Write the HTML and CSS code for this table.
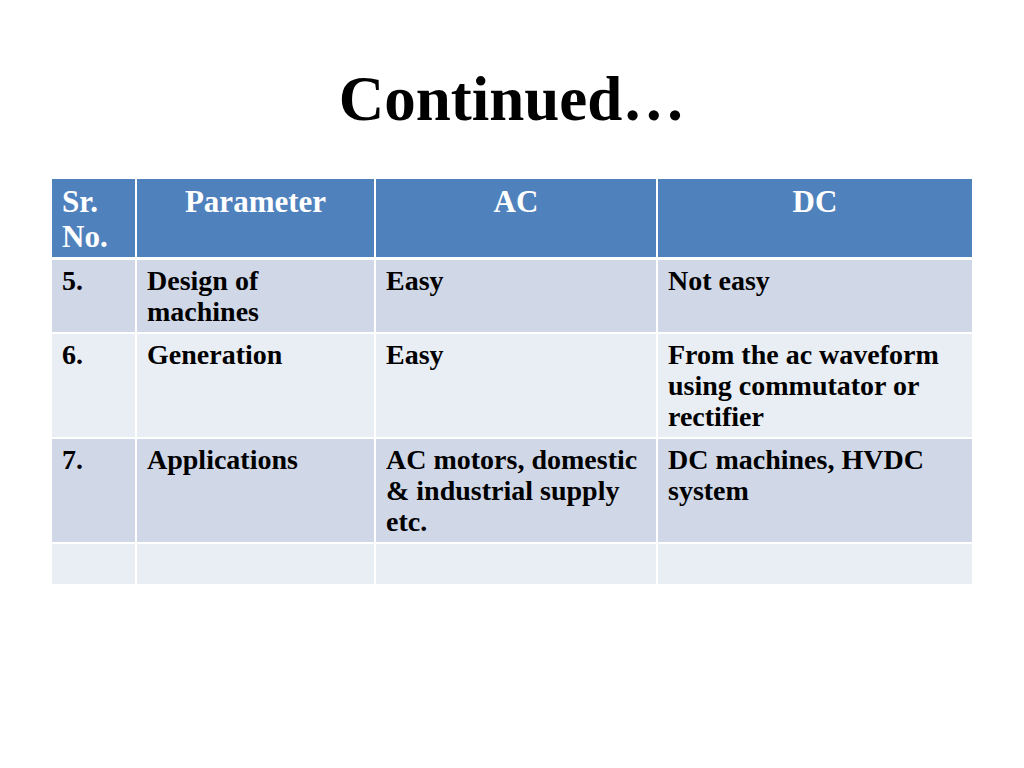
FILE: index.html
```html
<!DOCTYPE html>
<html lang="en">
<head>
<meta charset="utf-8">
<title>Continued…</title>
<link rel="stylesheet" href="styles.css">
</head>
<body>
<div class="slide">
  <h1 class="title">Continued…</h1>
  <table class="cmp">
    <colgroup>
      <col class="c1"><col class="c2"><col class="c3"><col class="c4">
    </colgroup>
    <thead>
      <tr>
        <th class="left">Sr.<br>No.</th>
        <th>Parameter</th>
        <th>AC</th>
        <th>DC</th>
      </tr>
    </thead>
    <tbody>
      <tr class="odd">
        <td>5.</td>
        <td>Design of<br>machines</td>
        <td>Easy</td>
        <td>Not easy</td>
      </tr>
      <tr class="even">
        <td>6.</td>
        <td>Generation</td>
        <td>Easy</td>
        <td>From the ac waveform<br>using commutator or<br>rectifier</td>
      </tr>
      <tr class="odd">
        <td>7.</td>
        <td>Applications</td>
        <td>AC motors, domestic<br>&amp; industrial supply<br>etc.</td>
        <td>DC machines, HVDC<br>system</td>
      </tr>
      <tr class="even empty">
        <td></td><td></td><td></td><td></td>
      </tr>
    </tbody>
  </table>
</div>
</body>
</html>
```

FILE: styles.css
```css
html, body {
  margin: 0;
  padding: 0;
  background: #ffffff;
}
.slide {
  width: 1024px;
  height: 768px;
  font-family: "Liberation Serif", "Times New Roman", serif;
  font-weight: bold;
  color: #000;
}
.title {
  margin: 0;
  padding-top: 64px;
  font-size: 63px;
  line-height: 70px;
  font-weight: bold;
  text-align: center;
}
.cmp {
  margin: 45px 0 0 52px;
  width: 920px;
  border-collapse: collapse;
  table-layout: fixed;
}
.c1 { width: 84px; }
.c2 { width: 239px; }
.c3 { width: 282px; }
.c4 { width: 315px; }
.cmp th {
  background: #4f81bd;
  color: #ffffff;
  font-size: 31px;
  line-height: 35px;
  font-weight: bold;
  text-align: center;
  vertical-align: top;
  padding: 5px 10px 3px;
  height: 70px;
  border-left: 2px solid #ffffff;
  border-bottom: 3px solid #ffffff;
}
.cmp th.left { text-align: left; }
.cmp th:first-child, .cmp td:first-child { border-left: none; }
.cmp td {
  font-size: 28px;
  line-height: 31px;
  vertical-align: top;
  padding: 5px 10px 5px;
  border-left: 2px solid #ffffff;
  border-top: 2px solid #ffffff;
}
.cmp thead + tbody tr:first-child td { border-top: none; }
.odd td { background: #d0d8e8; }
.even td { background: #e9edf4; }
.empty td { height: 30px; }
```
